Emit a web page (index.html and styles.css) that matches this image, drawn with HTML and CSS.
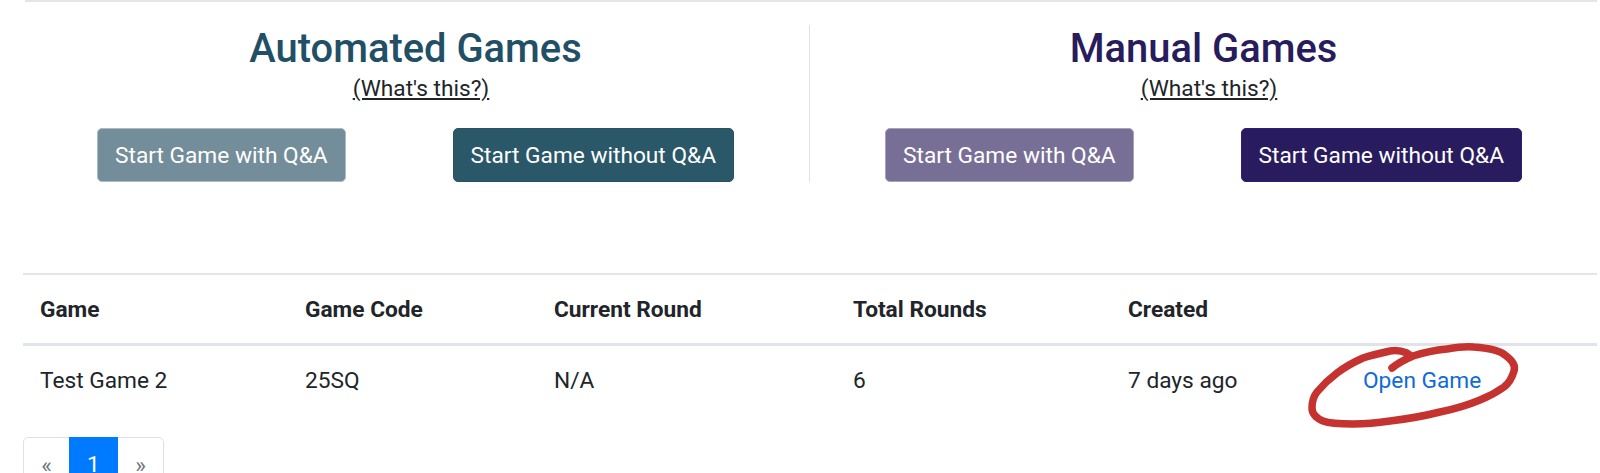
FILE: index.html
```html
<!DOCTYPE html>
<html lang="en">
<head>
<meta charset="utf-8">
<title>Games</title>
<link rel="stylesheet" href="styles.css">
</head>
<body>
<main class="page">
  <section class="starters">
    <div class="col col-auto">
      <h2 class="title title-auto">Automated Games</h2>
      <a class="whats" href="#">(What's this?)</a>
      <div class="actions">
        <a class="btn btn-auto-light" href="#">Start Game with Q&amp;A</a>
        <a class="btn btn-auto" href="#">Start Game without Q&amp;A</a>
      </div>
    </div>
    <div class="col col-manual">
      <h2 class="title title-manual">Manual Games</h2>
      <a class="whats" href="#">(What's this?)</a>
      <div class="actions">
        <a class="btn btn-manual-light" href="#">Start Game with Q&amp;A</a>
        <a class="btn btn-manual" href="#">Start Game without Q&amp;A</a>
      </div>
    </div>
  </section>
  <table class="games">
    <thead>
      <tr><th class="c1">Game</th><th class="c2">Game Code</th><th class="c3">Current Round</th><th class="c4">Total Rounds</th><th class="c5">Created</th><th></th></tr>
    </thead>
    <tbody>
      <tr><td>Test Game 2</td><td>25SQ</td><td>N/A</td><td>6</td><td>7 days ago</td><td class="open"><a href="#">Open Game</a></td></tr>
    </tbody>
  </table>
  <nav class="pager">
    <a class="pg" href="#">«</a>
    <a class="pg pg-active" href="#">1</a>
    <a class="pg" href="#">»</a>
  </nav>
</main>
<svg class="scribble" width="1600" height="473" viewBox="0 0 1600 473" aria-hidden="true">
  <path d="M1392 368 C1398 363 1406 359 1413 356 C1425 352 1436 350 1447 349 C1458 347 1466 346 1474 347 C1489 348 1500 351 1505 355 C1512 360 1516 365 1514 371 C1512 378 1508 384 1504 387 C1497 392 1490 396 1480 400 C1468 405 1455 409 1440 412 C1424 416 1407 419 1390 421 C1377 423 1365 424 1353 424 C1342 424 1331 424 1323 421 C1316 418 1312 414 1312 408 C1312 402 1313 397 1317 392 C1322 386 1329 379 1337 373 C1345 367 1354 362 1363 358 C1372 355 1381 353 1390 351 C1396 350 1402 351 1407 353 L1410 355" />
</svg>
</body>
</html>
```

FILE: styles.css
```css
html, body {
  margin: 0;
  height: 473px;
  overflow: hidden;
  background: #fff;
}
body {
  position: relative;
  font-family: Roboto, "Liberation Sans", sans-serif;
  font-size: 22.7px;
  color: #212529;
}
.page {
  padding-left: 23px;
  padding-right: 3px;
}
.starters {
  display: grid;
  grid-template-columns: 785px 1fr;
  margin-left: 2px;
  border-top: 2px solid #e4e5ea;
  padding-top: 23px;
  height: 273px;
  box-sizing: border-box;
}
.col {
  height: 157px;
  display: flex;
  flex-direction: column;
  align-items: center;
}
.col-auto {
  border-right: 1px solid #dfe1e5;
  padding-right: 3px;
}
.title {
  margin: 1px 0 0;
  font-size: 39.9px;
  line-height: 46px;
  font-weight: 500;
}
.title-auto { color: #214f66; }
.title-manual { color: #271c5c; }
.whats {
  color: #212529;
  text-decoration: underline;
  line-height: 30px;
  margin-top: 2px;
  margin-left: 11px;
}
.actions {
  display: flex;
  gap: 107px;
  margin-top: 24px;
}
.btn {
  display: flex;
  align-items: center;
  height: 54px;
  box-sizing: border-box;
  padding: 0 17px;
  border-radius: 5px;
  color: #fff;
  text-decoration: none;
  border: 1px solid transparent;
}
.btn-auto-light { background: #748d9a; border-color: #a9bac3; }
.btn-auto { background: #2a5868; border-color: #235567; }
.btn-manual-light { background: #786f97; border-color: #a7a1bd; }
.btn-manual { background: #281c5e; border-color: #2b1f7a; }
.games {
  width: 100%;
  border-collapse: collapse;
  table-layout: fixed;
}
.games th, .games td {
  text-align: left;
  padding: 0 17px;
}
.games th {
  font-weight: 700;
  height: 68px;
  border-top: 2px solid #e4e5ea;
  border-bottom: 3px solid #e1e3ea;
}
.games td { height: 69px; }
.c1 { width: 231px; }
.c2 { width: 215px; }
.c3 { width: 265px; }
.c4 { width: 241px; }
.c5 { width: 201px; }
.open a {
  color: #0f6bd8;
  text-decoration: none;
}
.pager {
  display: inline-flex;
  margin-top: 22px;
  border: 1px solid #dee2e6;
  border-radius: 5px;
}
.pg {
  height: 50px;
  padding-top: 14px;
  box-sizing: border-box;
  text-align: center;
  width: 45px;
  color: #6c757d;
  text-decoration: none;
}
.pg-active {
  width: 49px;
  background: #007bff;
  color: #fff;
  margin-top: -1px;
}
.scribble {
  position: absolute;
  left: 0;
  top: 0;
  pointer-events: none;
}
.scribble path {
  fill: none;
  stroke: #c53331;
  stroke-width: 7.5;
  stroke-linecap: round;
  stroke-linejoin: round;
}
```
